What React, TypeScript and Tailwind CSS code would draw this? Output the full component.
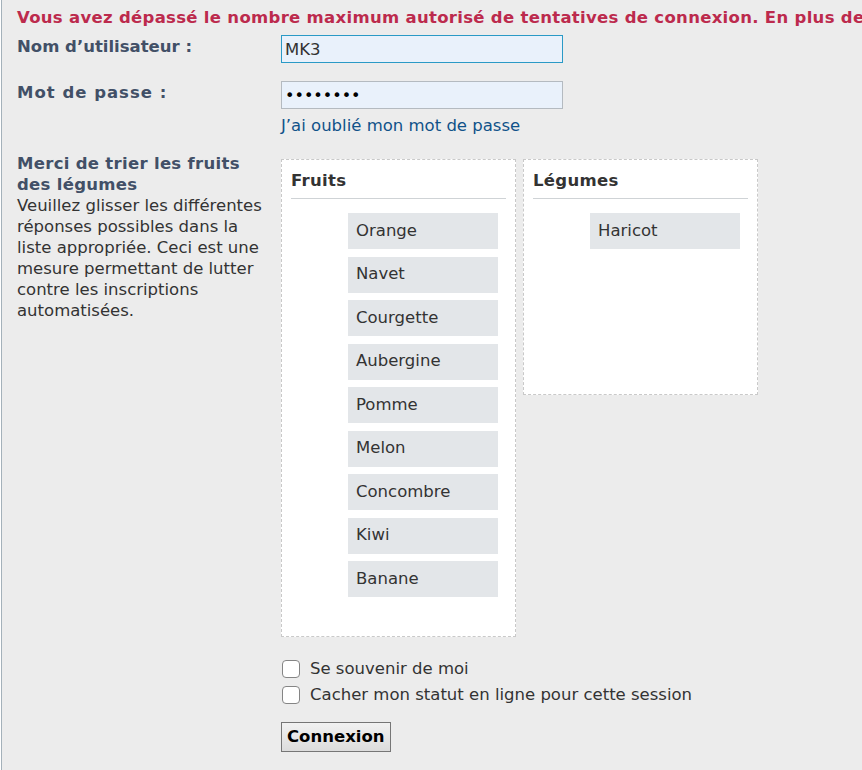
import React from 'react';

const fruits: string[] = ['Orange', 'Navet', 'Courgette', 'Aubergine', 'Pomme', 'Melon', 'Concombre', 'Kiwi', 'Banane'];
const legumes: string[] = ['Haricot'];

const SortBox: React.FC<{ title: string; items: string[]; minH: string }> = ({ title, items, minH }) => (
  <div className={`w-[235px] bg-white border border-dashed border-[#c9c9c9] px-[9px] pt-[11px] ${minH}`}>
    <h3 className="font-bold text-[#333] leading-[20px] pb-[7px] border-b border-[#cfd3d6] tracking-[0.3px]">{title}</h3>
    <ul className="flex flex-col gap-[7.5px] pl-[57px] pt-[14px] pb-[39px]">
      {items.map((item) => (
        <li key={item} className="w-[150px] h-[36px] bg-[#e3e6e9] flex items-center px-[8px] text-[#333]">
          {item}
        </li>
      ))}
    </ul>
  </div>
);

const App: React.FC = () => {
  return (
    <div
      className="min-h-[770px] w-[862px] overflow-hidden bg-[#ececec] border-l border-[#a4b1ba] ml-px text-[16.5px] text-[#333]"
      style={{ fontFamily: '"DejaVu Sans", Verdana, sans-serif' }}
    >
      <div className="pl-[15px] pt-[7px]">
        <p className="font-bold text-[#bc2a4d] whitespace-nowrap leading-[21px] tracking-[0.3px]">
          Vous avez dépassé le nombre maximum autorisé de tentatives de connexion. En plus de votre nom d’utilisateur
        </p>

        <div className="flex mt-[7px]">
          <label className="w-[264px] shrink-0 font-bold text-[#425067] leading-[21px] pt-[1px]">Nom d’utilisateur :</label>
          <input
            type="text"
            defaultValue="MK3"
            className="w-[282px] h-[28px] bg-[#e9f1fb] border border-[#2a9ac6] px-[3px] text-[16.5px] text-[#333] outline-none"
          />
        </div>

        <div className="flex mt-[18px]">
          <label className="w-[264px] shrink-0 font-bold text-[#425067] leading-[21px] pt-[1px] tracking-[1px]">Mot de passe :</label>
          <div className="flex flex-col">
            <input
              type="password"
              defaultValue="MK3MK3MK"
              className="w-[282px] h-[28px] bg-[#e9f1fb] border border-[#b4bac0] px-[3px] text-[16px] text-black outline-none"
            />
            <a href="#" className="text-[#105289] leading-[21px] mt-[6px]">J’ai oublié mon mot de passe</a>
          </div>
        </div>

        <div className="flex mt-[23px]">
          <div className="w-[264px] shrink-0 pr-[14px] leading-[21px]">
            <div className="font-bold text-[#425067] -mt-[6px] tracking-[0.3px]">Merci de trier les fruits des légumes</div>
            <div className="text-[#333]">
              Veuillez glisser les différentes réponses possibles dans la liste appropriée. Ceci est une mesure permettant de lutter contre les inscriptions automatisées.
            </div>
          </div>
          <div className="flex items-start gap-[7px]">
            <SortBox title="Fruits" items={fruits} minH="" />
            <SortBox title="Légumes" items={legumes} minH="min-h-[236px]" />
          </div>
        </div>

        <div className="ml-[265px] mt-[23px] flex flex-col gap-[8px]">
          <label className="flex items-center gap-[10px] leading-[18px]">
            <input type="checkbox" className="w-[18px] h-[18px] appearance-none rounded-[4px] border border-[#858585] bg-white" />
            <span className="text-[#333]">Se souvenir de moi</span>
          </label>
          <label className="flex items-center gap-[10px] leading-[18px]">
            <input type="checkbox" className="w-[18px] h-[18px] appearance-none rounded-[4px] border border-[#858585] bg-white" />
            <span className="text-[#333]">Cacher mon statut en ligne pour cette session</span>
          </label>
          <div className="mt-[10px] -ml-px">
            <button className="h-[30px] px-[5px] font-bold text-black border border-[#767676] bg-gradient-to-b from-[#f2f2f2] to-[#dcdcdc]">
              Connexion
            </button>
          </div>
        </div>
      </div>
    </div>
  );
};

export default App;
